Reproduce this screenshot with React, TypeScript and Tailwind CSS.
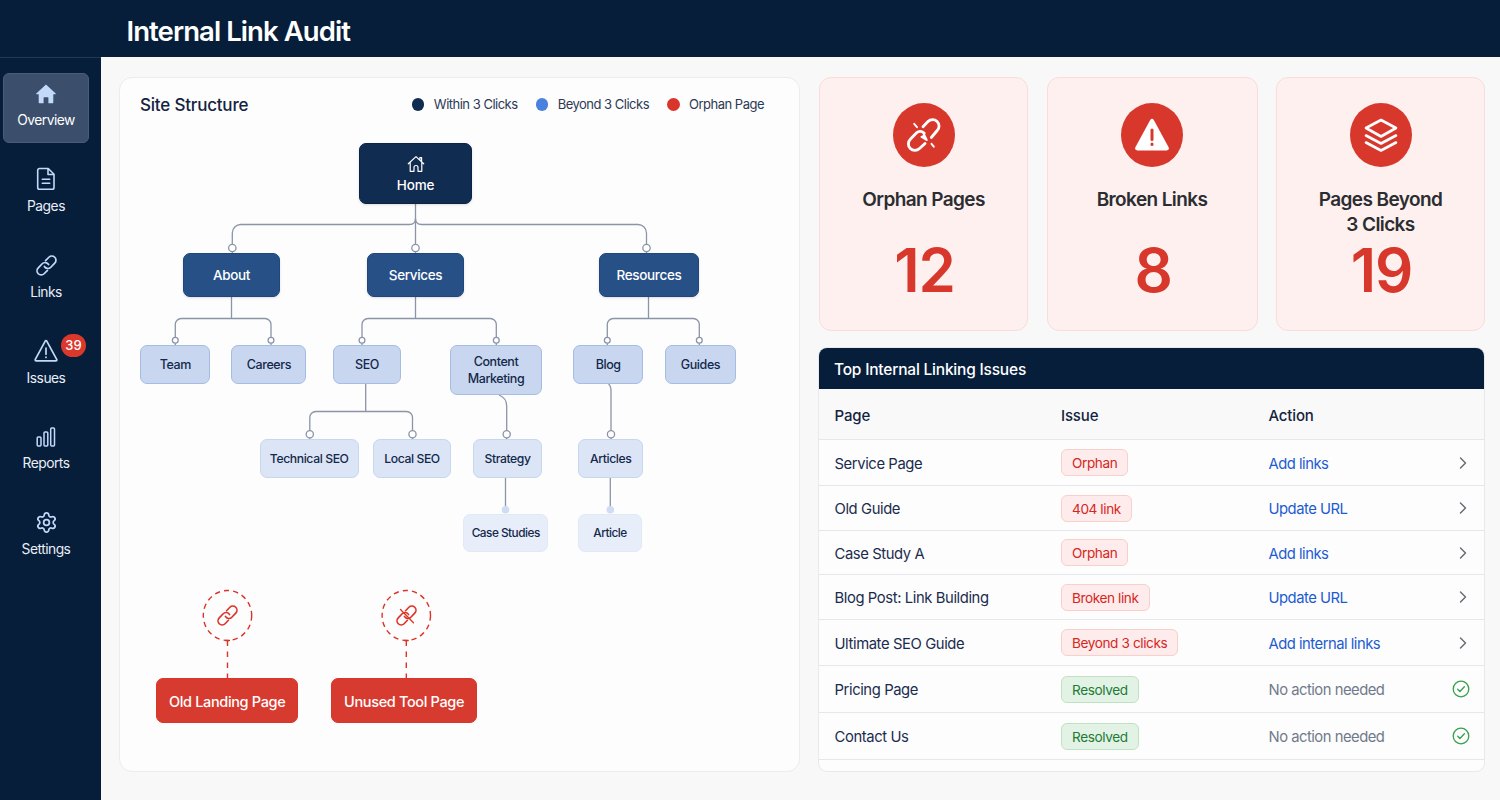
import type { ReactNode } from 'react'
import clsx from 'clsx'
import { ChevronRight, Settings } from 'lucide-react'

type Tone = 'root' | 'primary' | 'light' | 'lighter' | 'lightest' | 'orphan'

interface TreeNode {
  label: string
  x: number
  y: number
  w: number
  h: number
  tone: Tone
}

interface Issue {
  page: string
  issue: string
  action: string
  resolved?: boolean
  height: number
}

const toneClass: Record<Tone, string> = {
  root: 'pt-0.5 bg-[#102c50] border-[#0b2446] text-white font-medium text-[13.5px] tracking-[-0.2px] shadow-sm',
  primary: 'pt-0.5 bg-[#275087] border-[#20467b] text-white font-medium text-[13.5px] tracking-[-0.35px] shadow-sm',
  light: 'bg-[#c8d7ef] border-[#a5bde3] text-[#14284b] font-medium text-[12.5px] tracking-[-0.4px]',
  lighter: 'bg-[#dbe5f5] border-[#c7d7f0] text-[#14284b] font-medium text-[12.2px] tracking-[-0.4px]',
  lightest: 'pt-0.5 bg-[#e8eef9] border-[#e1e9f7] text-[#14284b] font-medium text-[11.8px] tracking-[-0.5px]',
  orphan: 'pt-px bg-[#d73a2f] border-[#d9352b] text-white font-medium text-[14.5px] tracking-[-0.35px]',
}

// Coordinates are relative to the tree canvas
const nodes: TreeNode[] = [
  { label: 'Home', x: 239, y: 12, w: 113, h: 61, tone: 'root' },
  { label: 'About', x: 63, y: 122, w: 97, h: 43.5, tone: 'primary' },
  { label: 'Services', x: 247, y: 122, w: 97, h: 43.5, tone: 'primary' },
  { label: 'Resources', x: 479, y: 122, w: 100, h: 43.5, tone: 'primary' },
  { label: 'Team', x: 20.4, y: 213.5, w: 70, h: 39.5, tone: 'light' },
  { label: 'Careers', x: 111.4, y: 213.5, w: 75, h: 39.5, tone: 'light' },
  { label: 'SEO', x: 213, y: 213.5, w: 68, h: 39.5, tone: 'light' },
  { label: 'Content Marketing', x: 330, y: 213.5, w: 92, h: 50.5, tone: 'light' },
  { label: 'Blog', x: 453, y: 213.5, w: 70.4, h: 39.5, tone: 'light' },
  { label: 'Guides', x: 545, y: 213.5, w: 71, h: 39.5, tone: 'light' },
  { label: 'Technical SEO', x: 139.5, y: 307.5, w: 99.4, h: 39.5, tone: 'lighter' },
  { label: 'Local SEO', x: 253, y: 307.5, w: 78, h: 39.5, tone: 'lighter' },
  { label: 'Strategy', x: 353, y: 307.5, w: 69, h: 39.5, tone: 'lighter' },
  { label: 'Articles', x: 458, y: 307.5, w: 65.4, h: 39.5, tone: 'lighter' },
  { label: 'Case Studies', x: 343, y: 382.5, w: 85.4, h: 38.5, tone: 'lightest' },
  { label: 'Article', x: 458, y: 382.5, w: 64, h: 38.5, tone: 'lightest' },
  { label: 'Old Landing Page', x: 36, y: 547, w: 142.4, h: 45, tone: 'orphan' },
  { label: 'Unused Tool Page', x: 211.4, y: 547, w: 145.5, h: 45, tone: 'orphan' },
]

const connectors = [
  'M295.5 73V113',
  'M112.3 113V102a8.5 8.5 0 0 1 8.5-8.5H289.5q6 0 6-6q0 6 6 6H518a8.5 8.5 0 0 1 8.5 8.5V113',
  'M111.5 165V187.5M55.3 206V193.5a6 6 0 0 1 6-6H145a6 6 0 0 1 6 6V206',
  'M295.5 165V187.5M242 206V193.5a6 6 0 0 1 6-6H370.3a6 6 0 0 1 6 6V206',
  'M528.5 165V187.5M487.3 206V193.5a6 6 0 0 1 6-6H573.3a6 6 0 0 1 6 6V206',
  'M245.7 253V280.5M189.8 299.5V286.5a6 6 0 0 1 6-6H286.5a6 6 0 0 1 6 6V299.5',
  'M379 264q7.7 3 7.7 11V299.5',
  'M488.5 253q2.5 2 2.5 7V299.5',
  'M385.5 347V382M490.3 347V382',
]

const joints = [
  { x: 112.3, y: 117, r: 3.7 },
  { x: 295.5, y: 117, r: 3.7 },
  { x: 526.5, y: 117, r: 3.7 },
  { x: 55.3, y: 209.3, r: 2.9 },
  { x: 151, y: 209.3, r: 2.9 },
  { x: 242, y: 209.3, r: 2.9 },
  { x: 376.3, y: 209.3, r: 2.9 },
  { x: 487.3, y: 209.3, r: 2.9 },
  { x: 579.3, y: 209.3, r: 2.9 },
  { x: 189.8, y: 303.3, r: 3.6 },
  { x: 292.5, y: 303.3, r: 3.6 },
  { x: 386.7, y: 303.3, r: 3.6 },
  { x: 491, y: 303.3, r: 3.6 },
]

const legend = [
  { label: 'Within 3 Clicks', dot: 'bg-[#102c50]' },
  { label: 'Beyond 3 Clicks', dot: 'bg-[#4a80de]' },
  { label: 'Orphan Page', dot: 'bg-[#d9352b]' },
]

const issues: Issue[] = [
  { page: 'Service Page', issue: 'Orphan', action: 'Add links', height: 46 },
  { page: 'Old Guide', issue: '404 link', action: 'Update URL', height: 45 },
  { page: 'Case Study A', issue: 'Orphan', action: 'Add links', height: 44 },
  { page: 'Blog Post: Link Building', issue: 'Broken link', action: 'Update URL', height: 45 },
  { page: 'Ultimate SEO Guide', issue: 'Beyond 3 clicks', action: 'Add internal links', height: 46 },
  { page: 'Pricing Page', issue: 'Resolved', action: 'No action needed', resolved: true, height: 47 },
  { page: 'Contact Us', issue: 'Resolved', action: 'No action needed', resolved: true, height: 47 },
]

function HomeSolid() {
  return (
    <svg viewBox="0 0 20 20" className="w-5 h-5" fill="#c3d9fa">
      <path d="M10 .6 19.7 9.6q.4.6-.4.7H17.3V18.6q0 .7-.7.7H12.4V13.8q0-.6-.6-.6H8.2q-.6 0-.6.6v5.5H3.4q-.7 0-.7-.7V10.3H.7q-.8-.1-.4-.7Z" />
    </svg>
  )
}

function HomeOutline() {
  return (
    <svg viewBox="0 0 18 18" className="w-[18px] h-[18px]" fill="none" stroke="white" strokeWidth="1.2" strokeLinecap="round" strokeLinejoin="round">
      <path d="M1.3 8.8 9 1.6l7.7 7.2M3.2 7.4V16.3H7V12.5a2 2 0 0 1 4 0v3.8h3.8V7.4M12.9 5V2.6H14.6V6.6" />
    </svg>
  )
}

function PageIcon() {
  return (
    <svg viewBox="0 0 20 24" className="w-5 h-6" fill="none" stroke="#c3d9fa" strokeWidth="1.6" strokeLinecap="round" strokeLinejoin="round">
      <path d="M3.5 1.5H12.2L18 7.3V20.5a1.8 1.8 0 0 1-1.8 1.8H3.5a1.8 1.8 0 0 1-1.8-1.8V3.3a1.8 1.8 0 0 1 1.8-1.8ZM12 1.8V7.5H17.8M6.3 12.2H13.7M6.3 16.3H13.7" />
    </svg>
  )
}

function ChainIcon({ className, width = 2 }: { className?: string; width?: number }) {
  return (
    <svg viewBox="0 0 24 24" className={className} fill="none" stroke="currentColor" strokeWidth={width} strokeLinecap="round" strokeLinejoin="round">
      <path d="M9.8 13A4.2 4.2 0 0 0 16.5 13.8L20.6 9.5A4.3 4.3 0 0 0 14.5 3.4L11 7" />
      <path d="M14.2 11A4.2 4.2 0 0 0 7.5 10.2L3.4 14.5A4.3 4.3 0 0 0 9.5 20.6L13 17" />
    </svg>
  )
}

function BrokenChainIcon() {
  return (
    <svg viewBox="0 0 36 36" className="w-9 h-9" fill="none" stroke="white" strokeWidth="2.8" strokeLinecap="round" strokeLinejoin="round">
      <path d="M17 9.8 22 4.5a6.3 6.3 0 0 1 9.2 9L25.3 20.5" />
      <path d="M18.2 16.2a5.3 5.3 0 0 0-7.6-.5L4.3 22.3a6.5 6.5 0 0 0 9.2 9.2L19 26.5" />
      <path d="m15.5 19.8 5.2 3.2-3-6.2" strokeWidth="2" fill="white" />
      <path d="m8.2 6.8 2.8 3.4M25.5 26.8l2.3 2.9" strokeWidth="1.9" />
    </svg>
  )
}

function IssuesIcon() {
  return (
    <svg viewBox="0 0 24 24" className="w-6 h-6 mt-px" fill="none" stroke="#c3d9fa" strokeWidth="1.7" strokeLinecap="round" strokeLinejoin="round">
      <path d="M11.1 2.3q.9-1.3 1.8 0L22.7 20.4q.5 1.4-1 1.5H2.3q-1.5-.1-1-1.5ZM12 9v6.2M12 18v.4" />
    </svg>
  )
}

function ReportsIcon() {
  return (
    <svg viewBox="0 0 20 20" className="w-5 h-5" fill="none" stroke="#c3d9fa" strokeWidth="1.5">
      <rect x="1.2" y="10" width="3.8" height="9" rx="1" />
      <rect x="8" y="5" width="3.8" height="14" rx="1" />
      <rect x="14.7" y="1" width="3.8" height="18" rx="1" />
    </svg>
  )
}

function NavItem({ label, icon, active, badge }: { label: string; icon: ReactNode; active?: boolean; badge?: number }) {
  return (
    <a className={clsx('relative flex flex-col items-center h-[70px] rounded-[6px] border', active ? 'bg-[#3b4e6b] border-[#4a5c78]' : 'border-transparent')}>
      <span className="flex items-center justify-center h-[26px] mt-[7px] text-[#c3d9fa]">{icon}</span>
      <span className={clsx('mt-[3.8px] text-[13.8px] leading-[21px] tracking-[-0.5px]', active ? 'text-white' : 'text-[#e9eef7]')}>{label}</span>
      {badge && (
        <span className="absolute left-[57px] top-[3px] flex items-center justify-center w-[25px] h-[23px] rounded-full bg-[#db382c] text-white text-[13px] font-medium">
          {badge}
        </span>
      )}
    </a>
  )
}

function StatCard({ label, value, icon }: { label: ReactNode; value: number; icon: ReactNode }) {
  return (
    <div className="flex flex-col items-center rounded-xl border border-[#fadcda] bg-[#fdf0ef] pt-[25px]">
      <div className="flex items-center justify-center w-[62px] h-16 rounded-[50%] bg-[#d8382c]">{icon}</div>
      <p className="mt-5 h-[53px] text-center text-[19px] leading-[25px] font-semibold tracking-[-0.6px] text-[#2b2d31]">{label}</p>
      <p className="pl-0.5 text-[60px] leading-[60px] font-semibold tracking-[-1.2px] text-[#d8382c]">{value}</p>
    </div>
  )
}

function SiteTree() {
  return (
    <div className="relative flex-1">
      <svg className="absolute inset-0 w-full h-full" fill="none">
        <g stroke="#8b95a7" strokeWidth="1.3">
          {connectors.map((d) => (
            <path key={d} d={d} />
          ))}
          {joints.map((j) => (
            <g key={`${j.x}-${j.y}`}>
              <path d={`M${j.x} ${j.y}v5`} />
              <circle cx={j.x} cy={j.y} r={j.r} fill="white" />
            </g>
          ))}
        </g>
        <circle cx="385.5" cy="378.7" r="3.8" fill="#cfdcf2" />
        <circle cx="490.3" cy="378.7" r="3.8" fill="#cfdcf2" />
        <g stroke="#dc3327" strokeWidth="1.4">
          {[107.5, 286.3].map((x) => (
            <g key={x}>
              <ellipse cx={x} cy="484.5" rx="24.2" ry="25" strokeDasharray="5.2 4.1" />
              <path d={`M${x - 2.5} 509.5h5`} />
              <path d={`M${x} 509.5V547`} strokeDasharray="5.5 5.5" />
            </g>
          ))}
        </g>
      </svg>
      <div className="absolute left-[96px] top-[473px] text-[#dc3327]">
        <ChainIcon className="w-[23px] h-[23px]" width={1.7} />
      </div>
      <div className="absolute left-[275px] top-[473px] text-[#dc3327]">
        <ChainIcon className="w-[23px] h-[23px]" width={1.7} />
        <svg viewBox="0 0 23 23" className="absolute inset-0 w-[23px] h-[23px]" stroke="currentColor" strokeWidth="1.3" strokeLinecap="round">
          <path d="M5.5 5.5 18.5 18.8" />
        </svg>
      </div>
      {nodes.map((n) => (
        <div
          key={n.label}
          className={clsx('absolute flex flex-col items-center justify-center rounded-[7px] border px-2 text-center leading-[17px]', toneClass[n.tone])}
          style={{ left: n.x, top: n.y, width: n.w, height: n.h }}
        >
          {n.tone === 'root' && (
            <span className="mb-1">
              <HomeOutline />
            </span>
          )}
          <span className={n.label.startsWith('Content') ? 'w-16' : 'whitespace-nowrap'}>{n.label}</span>
        </div>
      ))}
    </div>
  )
}

function IssuesTable() {
  return (
    <section className="flex flex-col flex-1 -ml-px rounded-[9px] border border-[#e8e9eb] bg-[#fdfdfe] overflow-hidden">
      <h2 className="-mx-px -mt-px h-[42px] px-4 bg-[#071e3b] text-white text-[15.5px] leading-[45px] font-medium tracking-[-0.2px]">
        Top Internal Linking Issues
      </h2>
      <div className="grid grid-cols-[226.5px_207.5px_1fr] items-center h-[51px] pt-[5px] pl-[15.5px] border-b border-[#e4e7eb] bg-[#f9f9fa] text-[15px] font-medium tracking-[-0.15px] text-[#14233f]">
        <span>Page</span>
        <span>Issue</span>
        <span>Action</span>
      </div>
      {issues.map((row) => (
        <div
          key={row.page}
          className="grid grid-cols-[226.5px_207.5px_1fr_auto] items-center pl-[15.5px] pr-[13px] border-b border-[#e4e7eb] text-[14.8px] tracking-[-0.4px] text-[#1b2c4d]"
          style={{ height: row.height }}
        >
          <span className="pt-[3px]">{row.page}</span>
          <span className="flex">
            <span
              className={clsx(
                'flex items-center h-[27px] pt-0.5 px-2.5 rounded-[6px] border text-[13.6px]',
                row.resolved ? 'bg-[#e2f3e5] border-[#bfe2c5] text-[#237a35]' : 'bg-[#fdeceb] border-[#f9cfcc] text-[#d6261d]',
              )}
            >
              {row.issue}
            </span>
          </span>
          <span className={clsx('pt-[3px] tracking-[-0.5px]', row.resolved ? 'text-[#707a8b]' : 'text-[#1e5bd0]')}>{row.action}</span>
          {row.resolved ? (
            <svg viewBox="0 0 18 18" className="w-[18px] h-[18px] mr-px" fill="none" stroke="#37a04b" strokeWidth="1.3" strokeLinecap="round" strokeLinejoin="round">
              <circle cx="9" cy="9" r="7.8" />
              <path d="m5.7 9.3 2.2 2.2 4.5-4.8" />
            </svg>
          ) : (
            <ChevronRight size={20} strokeWidth={1.7} color="#666b73" className="-mr-0.5" />
          )}
        </div>
      ))}
    </section>
  )
}

export default function App() {
  return (
    <div className="flex flex-col w-[1500px] h-[800px] overflow-hidden bg-[#f8f8f9] font-['Inter','Liberation_Sans',sans-serif]">
      <header className="flex items-center h-[57px] pl-[126.5px] pt-1.5 bg-[#071e3b]">
        <h1 className="text-[27.5px] font-semibold tracking-[-0.93px] text-white">Internal Link Audit</h1>
      </header>

      <div className="flex flex-1 min-h-0">
        <aside className="w-[101px] bg-[#071e3b] border-t border-[#22385a]">
          <nav className="flex flex-col gap-[15.8px] w-[86px] ml-[3px] mt-[14.5px]">
            <NavItem label="Overview" icon={<HomeSolid />} active />
            <NavItem label="Pages" icon={<PageIcon />} />
            <NavItem label="Links" icon={<ChainIcon className="w-[23px] h-[23px]" width={1.8} />} />
            <NavItem label="Issues" icon={<IssuesIcon />} badge={39} />
            <NavItem label="Reports" icon={<ReportsIcon />} />
            <NavItem label="Settings" icon={<Settings size={23} strokeWidth={1.8} />} />
          </nav>
        </aside>

        <main className="flex flex-1 gap-[19px] pl-[18px] pr-[15px] pt-5 pb-7">
          <section className="flex flex-col w-[681px] rounded-[13px] border border-[#ebecee] bg-[#fdfdfe]">
            <div className="flex items-center justify-between h-[53px] pl-5 pr-[35px]">
              <h2 className="pt-[3px] text-[17px] font-medium tracking-[-0.2px] text-[#14233f]">Site Structure</h2>
              <ul className="flex gap-[18px] text-[13px] tracking-[-0.5px] text-[#2c3a54]">
                {legend.map((item) => (
                  <li key={item.label} className="flex items-center gap-[9.5px]">
                    <span className={clsx('w-[12.5px] h-[13px] rounded-full', item.dot)} />
                    {item.label}
                  </li>
                ))}
              </ul>
            </div>
            <SiteTree />
          </section>

          <div className="flex flex-col flex-1 gap-4">
            <div className="grid grid-cols-[209px_211px_209px] justify-between h-[254px]">
              <StatCard label="Orphan Pages" value={12} icon={<BrokenChainIcon />} />
              <StatCard
                label="Broken Links"
                value={8}
                icon={
                  <svg viewBox="0 0 36 34" className="w-9 h-[34px]">
                    <path d="M16.2 2q1.8-2.6 3.6 0L34.6 29.2q1.1 2.8-1.9 3.2H3.3q-3-.4-1.9-3.2Z" fill="white" />
                    <path d="M18 12v9.5M18 26v.6" stroke="#d8382c" strokeWidth="3" strokeLinecap="round" />
                  </svg>
                }
              />
              <StatCard
                label={<>Pages Beyond<br />3 Clicks</>}
                value={19}
                icon={
                  <svg viewBox="0 0 36 36" className="w-9 h-9" fill="none" stroke="white" strokeWidth="2.6" strokeLinecap="round" strokeLinejoin="round">
                    <path d="M18 3 33 11 18 19.5 3 11ZM3 18.5 18 26.5 33 18.5M3 25.5 18 33.5 33 25.5" />
                  </svg>
                }
              />
            </div>
            <IssuesTable />
          </div>
        </main>
      </div>
    </div>
  )
}
